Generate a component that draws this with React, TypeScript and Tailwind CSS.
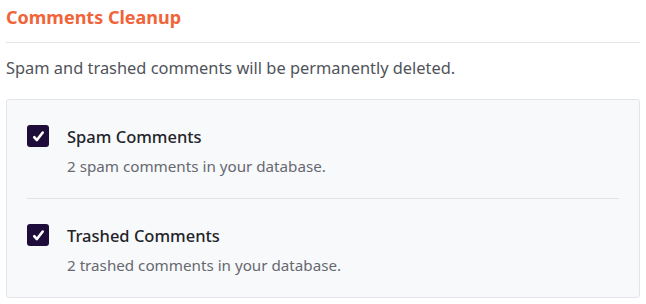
const items = [
  { title: "Spam Comments", desc: "2 spam comments in your database." },
  { title: "Trashed Comments", desc: "2 trashed comments in your database." },
];

function CheckBox() {
  return (
    <div className="mt-[2px] w-[22px] h-[22px] rounded-[3px] bg-[#1e0c3a] flex items-center justify-center shrink-0">
      <svg viewBox="0 0 16 16" className="w-[15px] h-[15px]" fill="none" stroke="white" strokeWidth={2.8} strokeLinecap="round" strokeLinejoin="round" aria-hidden="true">
        <path d="M3.5 8.8l2.8 3 6.2-8" />
      </svg>
    </div>
  );
}

export default function App() {
  return (
    <div className="bg-white w-[646px] h-[304px] px-[6px] pt-[4px] font-['Noto_Sans',sans-serif]">
      <h2 className="text-[18px] font-bold text-[#f0643a] leading-[26px]">Comments Cleanup</h2>
      <div className="mt-[12px] h-px bg-[#e3e4e8]" />
      <p className="mt-[13px] text-[16.4px] text-[#50535a] leading-[24px]">
        Spam and trashed comments will be permanently deleted.
      </p>
      <div className="mt-[19px] border border-[#e4e5ea] rounded-[3px] bg-[#f8f9fb] pl-[20px] pr-[20px]">
        {items.map((it, i) => (
          <div key={it.title} className={i > 0 ? "border-t border-[#e1e2e8]" : ""}>
            <div className="flex gap-[18px] pt-[23px] pb-[22px]">
              <CheckBox />
              <div>
                <div className="mt-[2px] text-[16.5px] font-medium text-[#23242a] leading-[24px]">{it.title}</div>
                <div className="mt-[7px] text-[15.2px] text-[#66686f] leading-[20px]">{it.desc}</div>
              </div>
            </div>
          </div>
        ))}
      </div>
    </div>
  );
}
